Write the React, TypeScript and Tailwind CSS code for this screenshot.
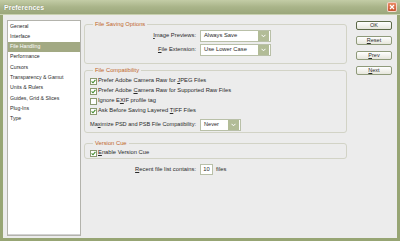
import React from "react";

const items = [
  "General",
  "Interface",
  "File Handling",
  "Performance",
  "Cursors",
  "Transparency & Gamut",
  "Units & Rulers",
  "Guides, Grid & Slices",
  "Plug-Ins",
  "Type",
];

const U = ({ children }: { children: React.ReactNode }) => <span className="underline">{children}</span>;

const Check = ({ on }: { on: boolean }) => (
  <span className="w-[7px] h-[7px] border border-[#8c9a72] bg-white flex items-center justify-center shrink-0 mr-[1px]">
    {on && (
      <svg width="5" height="5" viewBox="0 0 5 5">
        <path d="M0.6 2.4 L2 3.8 L4.4 0.9" stroke="#3f8a2c" strokeWidth="1.1" fill="none" />
      </svg>
    )}
  </span>
);

const Select = ({ value, w }: { value: string; w: string }) => (
  <div className={`${w} h-[12px] border border-[#b9c0a8] bg-white flex items-center pl-[3px] pr-[1px]`}>
    <span className="flex-1">{value}</span>
    <span className="w-[11px] h-[10px] bg-[#b2bc97] flex items-center justify-center">
      <svg width="5" height="4" viewBox="0 0 5 4">
        <path d="M0.5 0.8 L2.5 2.8 L4.5 0.8" stroke="#fff" strokeWidth="1" fill="none" />
      </svg>
    </span>
  </div>
);

const Btn = ({ children, def }: { children: React.ReactNode; def?: boolean }) => (
  <div
    className={`w-[36px] h-[9px] rounded-[2px] border bg-gradient-to-b from-white to-[#e6e6dc] flex items-center justify-center text-[5.5px] leading-none ${
      def ? "border-[#5d6a48]" : "border-[#8f9a7a]"
    }`}
  >
    <span>{children}</span>
  </div>
);

// label column is 110px wide, right aligned at x=200
const Label = ({ children }: { children: React.ReactNode }) => (
  <div className="w-[110px] pr-[4px] flex justify-end shrink-0">
    <span className="whitespace-nowrap">{children}</span>
  </div>
);

const Row = ({ on, children }: { on: boolean; children: React.ReactNode }) => (
  <div className="h-[10px] flex items-center">
    <Check on={on} />
    <span className="whitespace-nowrap">{children}</span>
  </div>
);

export default function App() {
  return (
    <div
      className="w-[400px] h-[241px] bg-[#97a574] flex flex-col text-[#2a2a2a] overflow-hidden"
      style={{ fontFamily: '"Liberation Sans", Arial, sans-serif' }}
    >
      {/* title bar */}
      <div className="h-[15px] bg-gradient-to-b from-[#c3cca6] via-[#a9b489] to-[#9ba77c] flex items-center pl-[4px] pr-[3px] border-b border-[#c9d1b0]">
        <span className="text-white font-bold text-[7px] leading-none flex-1 [text-shadow:0_0_1px_#6b7550]">Preferences</span>
        <span className="w-[10px] h-[10px] rounded-[2px] bg-gradient-to-b from-[#e98a64] to-[#c8532f] border border-white/70 flex items-center justify-center">
          <svg width="6" height="6" viewBox="0 0 6 6">
            <path d="M1 1 L5 5 M5 1 L1 5" stroke="#fff" strokeWidth="1.2" />
          </svg>
        </span>
      </div>

      <div className="flex-1 mx-[3px] mb-[3px] bg-[#ececec] flex pt-[5px] pl-[4px] text-[5.8px] leading-none">
        {/* category list */}
        <div className="w-[74px] h-[216px] bg-white border border-[#b3b3ac] shadow-[inset_0_-1px_0_#d2d2d2] text-[5.2px]">
          {items.map((it) => (
            <div
              key={it}
              className={`h-[10.3px] flex items-center pl-[2px] ${
                it === "File Handling" ? "bg-[#a2a983] text-white" : ""
              }`}
            >
              {it}
            </div>
          ))}
        </div>

        {/* settings */}
        <div className="w-[263px] ml-[3px] flex flex-col">
          <fieldset className="border border-[#d2d3c6] rounded-[3px] px-[5px] pb-[7px]">
            <legend className="ml-[3px] px-[2px] text-[#c0662a] leading-[8px]">File Saving Options</legend>
            <div className="flex flex-col gap-[2px] pt-[2px]">
              <div className="flex items-center">
                <Label><U>I</U>mage Previews:</Label>
                <Select value="Always Save" w="w-[71px]" />
              </div>
              <div className="flex items-center">
                <Label><U>F</U>ile Extension:</Label>
                <Select value="Use Lower Case" w="w-[71px]" />
              </div>
            </div>
          </fieldset>

          <fieldset className="mt-[2px] border border-[#d2d3c6] rounded-[3px] px-[5px] pb-[1px]">
            <legend className="ml-[3px] px-[2px] text-[#c0662a] leading-[8px]">File Compatibility</legend>
            <div className="flex flex-col pt-[2px]">
              <Row on>Prefer Adobe Camera Raw for <U>J</U>PEG Files</Row>
              <Row on>Prefer Adobe <U>C</U>amera Raw for Supported Raw Files</Row>
              <Row on={false}>Ignore E<U>X</U>IF profile tag</Row>
              <Row on>Ask Before Saving Layered <U>T</U>IFF Files</Row>
              <div className="flex items-center mt-[3px] text-[5.6px]">
                <Label>Ma<U>x</U>imize PSD and PSB File Compatibility:</Label>
                <Select value="Never" w="w-[41px]" />
              </div>
            </div>
          </fieldset>

          <fieldset className="mt-[6px] border border-[#d2d3c6] rounded-[3px] px-[5px]">
            <legend className="ml-[3px] px-[2px] text-[#c0662a] leading-[8px]">Version Cue</legend>
            <div className="pt-[1px]">
              <Row on><U>E</U>nable Version Cue</Row>
            </div>
          </fieldset>

          <div className="flex items-center mt-[5px] pl-[6px]">
            <Label><U>R</U>ecent file list contains:</Label>
            <span className="w-[13px] h-[11px] border border-[#b9c0a8] bg-white flex items-center justify-center">10</span>
            <span className="ml-[3px]">files</span>
          </div>
        </div>

        {/* buttons */}
        <div className="ml-[9px] flex flex-col gap-[6px] pt-[1px]">
          <Btn def>OK</Btn>
          <Btn><U>R</U>eset</Btn>
          <Btn><U>P</U>rev</Btn>
          <Btn><U>N</U>ext</Btn>
        </div>
      </div>
    </div>
  );
}
